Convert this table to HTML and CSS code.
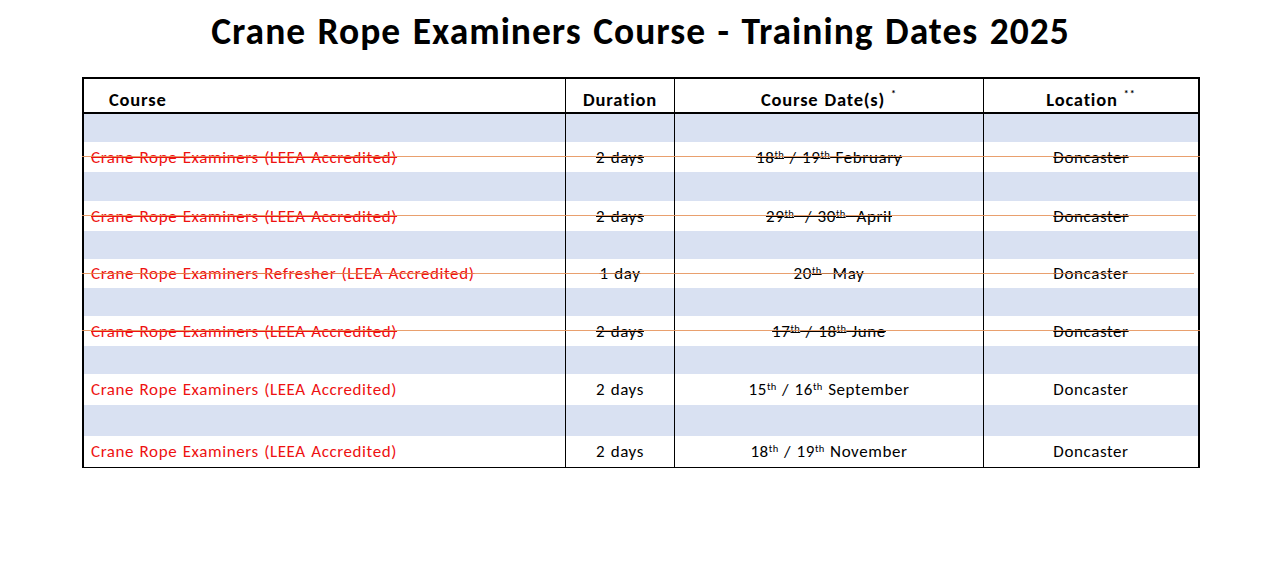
FILE: index.html
```html
<!DOCTYPE html>
<html lang="en">
<head>
<meta charset="utf-8">
<title>Crane Rope Examiners Course - Training Dates 2025</title>
<link rel="stylesheet" href="styles.css">
</head>
<body>
<div class="page">
  <header class="title-wrap">
    <h1 class="title">Crane Rope Examiners Course - Training Dates 2025</h1>
  </header>
  <div class="table">
    <div class="row head">
      <div class="cell c1"><span>Course</span></div>
      <div class="cell c2"><span>Duration</span></div>
      <div class="cell c3"><span>Course Date(s) <sup>*</sup></span></div>
      <div class="cell c4"><span>Location <sup>**</sup></span></div>
    </div>

    <div class="row band h28"><div class="cell"></div><div class="cell"></div><div class="cell"></div><div class="cell"></div></div>
    <div class="row entry h30 struck">
      <div class="cell c1"><span class="txt">Crane Rope Examiners (LEEA Accredited)</span></div>
      <div class="cell c2"><span class="txt">2 days</span></div>
      <div class="cell c3"><span class="txt">18<sup>th</sup> / 19<sup>th</sup> February</span></div>
      <div class="cell c4"><span class="txt">Doncaster</span></div>
    </div>

    <div class="row band h29"><div class="cell"></div><div class="cell"></div><div class="cell"></div><div class="cell"></div></div>
    <div class="row entry h30 struck short1">
      <div class="cell c1"><span class="txt">Crane Rope Examiners (LEEA Accredited)</span></div>
      <div class="cell c2"><span class="txt">2 days</span></div>
      <div class="cell c3"><span class="txt">29<sup>th</sup>&nbsp; / 30<sup>th</sup>&nbsp; April</span></div>
      <div class="cell c4"><span class="txt">Doncaster</span></div>
    </div>

    <div class="row band h28"><div class="cell"></div><div class="cell"></div><div class="cell"></div><div class="cell"></div></div>
    <div class="row entry h29 struck short2">
      <div class="cell c1"><span class="txt">Crane Rope Examiners Refresher (LEEA Accredited)</span></div>
      <div class="cell c2"><span class="txt">1 day</span></div>
      <div class="cell c3"><span class="txt">20<sup>th</sup>&nbsp; May</span></div>
      <div class="cell c4"><span class="txt">Doncaster</span></div>
    </div>

    <div class="row band h28"><div class="cell"></div><div class="cell"></div><div class="cell"></div><div class="cell"></div></div>
    <div class="row entry h30 struck">
      <div class="cell c1"><span class="txt">Crane Rope Examiners (LEEA Accredited)</span></div>
      <div class="cell c2"><span class="txt">2 days</span></div>
      <div class="cell c3"><span class="txt">17<sup>th</sup> / 18<sup>th</sup> June</span></div>
      <div class="cell c4"><span class="txt">Doncaster</span></div>
    </div>

    <div class="row band h28"><div class="cell"></div><div class="cell"></div><div class="cell"></div><div class="cell"></div></div>
    <div class="row entry h31">
      <div class="cell c1"><span class="txt">Crane Rope Examiners (LEEA Accredited)</span></div>
      <div class="cell c2"><span class="txt">2 days</span></div>
      <div class="cell c3"><span class="txt">15<sup>th</sup> / 16<sup>th</sup> September</span></div>
      <div class="cell c4"><span class="txt">Doncaster</span></div>
    </div>

    <div class="row band h31"><div class="cell"></div><div class="cell"></div><div class="cell"></div><div class="cell"></div></div>
    <div class="row entry h31">
      <div class="cell c1"><span class="txt">Crane Rope Examiners (LEEA Accredited)</span></div>
      <div class="cell c2"><span class="txt">2 days</span></div>
      <div class="cell c3"><span class="txt">18<sup>th</sup> / 19<sup>th</sup> November</span></div>
      <div class="cell c4"><span class="txt">Doncaster</span></div>
    </div>
  </div>
</div>
</body>
</html>
```

FILE: styles.css
```css
* { box-sizing: border-box; }
html, body { margin: 0; padding: 0; background: #fff; }
body {
  font-family: Carlito, Lato, "Open Sans", "Liberation Sans", sans-serif;
  color: #000;
  width: 1275px;
  height: 571px;
  overflow: hidden;
}
.page { width: 1275px; }
.title-wrap {
  height: 77px;
  display: flex;
  justify-content: center;
  padding-top: 9px;
  padding-left: 6px;
}
.title {
  margin: 0;
  font-size: 37.5px;
  line-height: 44px;
  font-weight: 700;
  letter-spacing: 1px;
  word-spacing: 2px;
}
.table {
  margin-left: 82px;
  width: 1118px;
  border-top: 2px solid #000;
  border-left: 2px solid #000;
  border-right: 2px solid #000;
  border-bottom: 1px solid #000;
}
.row {
  display: grid;
  grid-template-columns: 482px 109px 309px 214px;
  position: relative;
}
.cell {
  border-right: 1px solid #000;
  display: flex;
  align-items: center;
  justify-content: center;
  font-size: 17px;
  letter-spacing: 0.6px;
  word-spacing: 1px;
  white-space: nowrap;
}
.cell:last-child { border-right: none; }
.head { height: 35px; border-bottom: 2px solid #000; }
.head .cell { font-weight: 700; font-size: 18.5px; letter-spacing: 0.8px; padding-top: 7px; }
.head .c1 { justify-content: flex-start; padding-left: 25px; }
.head sup { font-size: 10px; position: relative; top: -1px; letter-spacing: 1px; }
.band { background: #d9e1f2; }
.entry { background: #fff; }
.h28 { height: 28px; }
.h29 { height: 29px; }
.h30 { height: 30px; }
.h31 { height: 31px; }
.entry .c1 { justify-content: flex-start; padding-left: 7px; color: #ee1111; }
.entry sup { font-size: 10.5px; line-height: 0; vertical-align: 5px; letter-spacing: 0.3px; }
.struck .txt { text-decoration: line-through; text-decoration-thickness: 1px; }
.struck .c1 .txt { text-decoration-color: #ee1111; }
.struck::after {
  content: "";
  position: absolute;
  left: -2px;
  right: -2px;
  top: 14px;
  height: 1px;
  background: #e58f55;
  opacity: 0.85;
}
.short1::after { right: 2px; }
.short2::after { right: 4px; }
```
